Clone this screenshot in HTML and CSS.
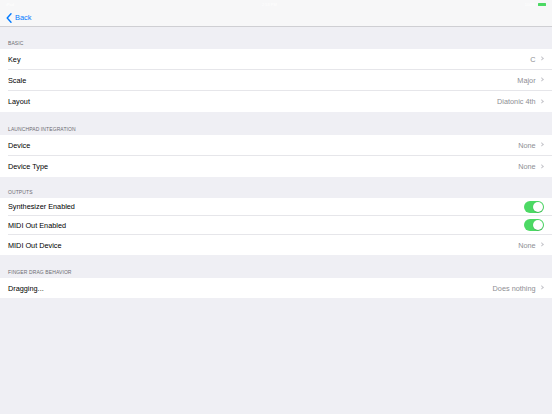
FILE: index.html
```html
<!DOCTYPE html>
<html>
<head>
<meta charset="utf-8">
<link rel="stylesheet" href="styles.css">
</head>
<body>
<div class="app">
  <header class="nav">
    <div class="status">
      <span class="st-left">iPad</span>
      <span class="st-time">2:53 PM</span>
      <span class="st-right">100% <span class="battery"><span class="batt-fill"></span></span></span>
    </div>
    <div class="navbar">
      <a class="back">
        <svg class="back-chev" width="6" height="10" viewBox="0 0 6 10"><path d="M5 0.8 L1.2 5 L5 9.2" fill="none" stroke="#007aff" stroke-width="1.4" stroke-linecap="round" stroke-linejoin="round"/></svg>
        <span>Back</span>
      </a>
    </div>
  </header>

  <section class="group">
    <div class="group-title">BASIC</div>
    <div class="rows">
      <div class="row h21"><span class="label">Key</span><span class="value">C</span><span class="chev"></span></div>
      <div class="row h21"><span class="label">Scale</span><span class="value">Major</span><span class="chev"></span></div>
      <div class="row h21 last"><span class="label">Layout</span><span class="value">Diatonic 4th</span><span class="chev"></span></div>
    </div>
  </section>

  <section class="group g2">
    <div class="group-title">LAUNCHPAD INTEGRATION</div>
    <div class="rows">
      <div class="row h21"><span class="label">Device</span><span class="value">None</span><span class="chev"></span></div>
      <div class="row h21 last"><span class="label">Device Type</span><span class="value">None</span><span class="chev"></span></div>
    </div>
  </section>

  <section class="group g3">
    <div class="group-title">OUTPUTS</div>
    <div class="rows">
      <div class="row h18"><span class="label">Synthesizer Enabled</span><span class="switch on"><span class="knob"></span></span></div>
      <div class="row h19"><span class="label">MIDI Out Enabled</span><span class="switch on"><span class="knob"></span></span></div>
      <div class="row h20 last"><span class="label">MIDI Out Device</span><span class="value">None</span><span class="chev"></span></div>
    </div>
  </section>

  <section class="group g4">
    <div class="group-title">FINGER DRAG BEHAVIOR</div>
    <div class="rows">
      <div class="row h20 last"><span class="label">Dragging...</span><span class="value">Does nothing</span><span class="chev"></span></div>
    </div>
  </section>
</div>
</body>
</html>
```
FILE: styles.css
```css
* { box-sizing: border-box; }
html, body { margin: 0; padding: 0; }
body {
  width: 552px;
  height: 414px;
  background: #efeff4;
  font-family: "Liberation Sans", Arial, sans-serif;
  color: #000;
  overflow: hidden;
}
.app { display: flex; flex-direction: column; }

.nav {
  background: #f7f7f8;
  border-bottom: 1px solid #cfcfd3;
  height: 27px;
  display: flex;
  flex-direction: column;
}
.status {
  height: 8px;
  display: flex;
  align-items: center;
  justify-content: space-between;
  padding: 0 6px;
  font-size: 4px;
  color: #ffffff;
}
.st-right { display: flex; align-items: center; gap: 2px; }
.battery {
  width: 9px; height: 4px;
  border-radius: 1px;
  display: inline-flex;
  padding: 0.5px;
}
.batt-fill { flex: 1; background: #4cd964; border-radius: 0.5px; }
.navbar {
  flex: 1;
  display: flex;
  align-items: center;
  padding: 1px 6px 0;
}
.back {
  display: flex;
  align-items: center;
  gap: 3px;
  color: #007aff;
  font-size: 7.4px;
}

.group { display: flex; flex-direction: column; }
.group-title {
  height: 22px;
  padding: 0 8px 3px;
  display: flex;
  align-items: flex-end;
  font-size: 5px;
  color: #6d6d72;
  letter-spacing: 0.1px;
}
.g2 .group-title { height: 23px; }
.g3 .group-title { height: 21px; }
.g4 .group-title { height: 23px; }

.rows { background: #fff; }
.row {
  display: flex;
  align-items: center;
  margin-left: 8px;
  padding-right: 8px;
  border-bottom: 1px solid #e6e6ea;
  font-size: 7.3px;
}
.row.last { border-bottom: none; }
.h21 { height: 21px; }
.h18 { height: 18px; }
.h19 { height: 19px; }
.h20 { height: 20px; }
.label { flex: 1; }
.value { color: #8e8e93; }
.chev {
  width: 3.4px;
  height: 3.4px;
  border-top: 1px solid #c7c7cc;
  border-right: 1px solid #c7c7cc;
  transform: rotate(45deg);
  margin-left: 4px;
  margin-right: 1px;
}
.switch {
  width: 20px;
  height: 12px;
  border-radius: 6px;
  background: #4cd964;
  display: flex;
  align-items: center;
  justify-content: flex-end;
  padding: 1px;
}
.knob {
  width: 10px;
  height: 10px;
  border-radius: 50%;
  background: #fff;
  box-shadow: 0 0.5px 1px rgba(0,0,0,0.25);
}
```
